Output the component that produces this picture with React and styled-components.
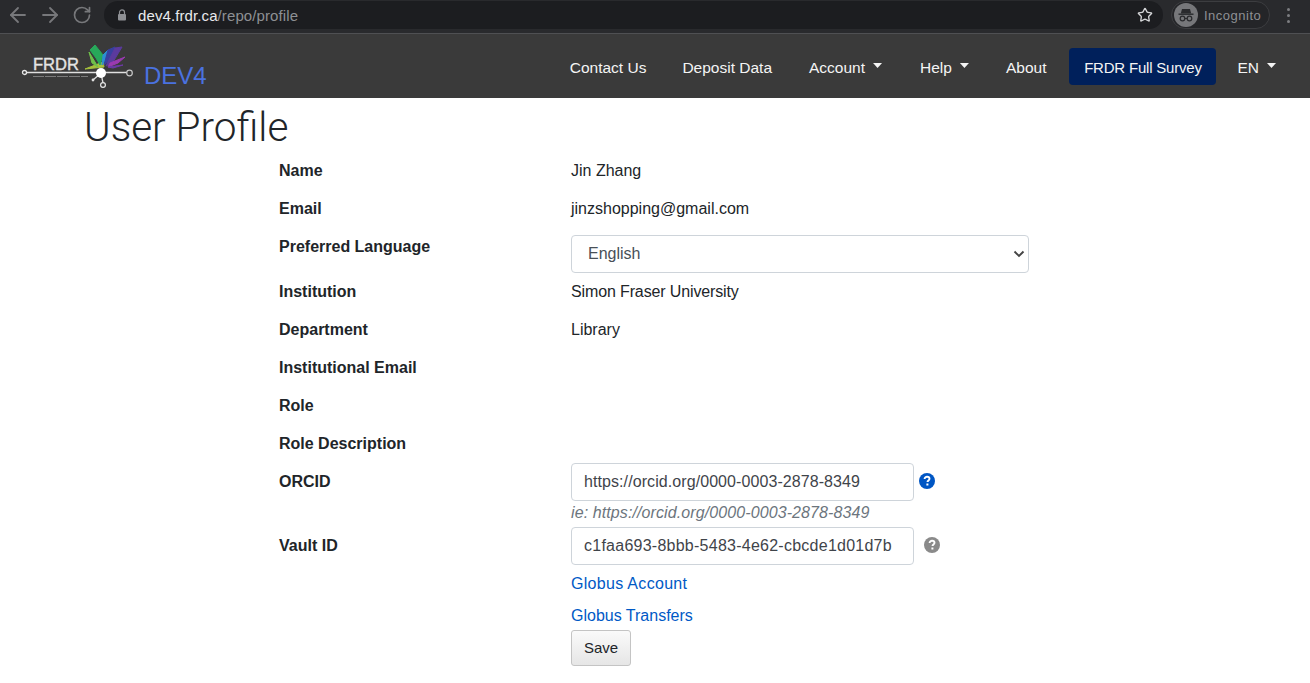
import React from "react";
import styled, { createGlobalStyle } from "styled-components";
import { ArrowLeft, ArrowRight, RotateCw, Star } from "lucide-react";

const GlobalStyle = createGlobalStyle`
  html, body {
    margin: 0;
    padding: 0;
    background: #fff;
    font-family: "Liberation Sans", Arial, sans-serif;
    font-size: 16px;
    color: #212529;
    overflow: hidden;
  }
`;

const Chrome = styled.div`
  height: 34px;
  box-sizing: border-box;
  background: #292a2d;
  border-bottom: 1px solid #4f5053;
  display: flex;
  align-items: center;
  padding: 1px 0 4px 6px;
`;

const NavArrows = styled.div`
  display: flex;
  align-items: center;
  gap: 8px;
  color: #77787b;
  width: 98px;

  svg:last-child {
    margin-left: 2px;
  }
`;

const AddressBar = styled.div`
  width: 1059px;
  height: 28px;
  background: #1c1d20;
  border-radius: 14px;
  display: flex;
  align-items: center;
  padding: 0 10px 0 13px;
  box-sizing: border-box;
  font-size: 15px;
  letter-spacing: 0.1px;
`;

const LockIcon = styled.svg`
  width: 10px;
  height: 12px;
  margin-right: 11px;
  flex: none;
`;

const Host = styled.span`
  color: #e8eaed;
`;

const UrlPath = styled.span`
  color: #8e9094;
  flex: 1;
`;

const IncognitoPill = styled.div`
  margin-left: 8px;
  width: 99px;
  height: 28px;
  border: 1px solid #3c3d40;
  background: #242528;
  border-radius: 14px;
  box-sizing: border-box;
  display: flex;
  align-items: center;
  gap: 6px;
  padding-left: 2px;
  color: #8e9094;
  font-size: 13px;
  letter-spacing: 0.5px;
`;

const Dots = styled.div`
  margin-left: 17px;
  display: flex;
  flex-direction: column;
  gap: 3px;

  span {
    width: 3px;
    height: 3px;
    border-radius: 50%;
    background: #7d7e81;
  }
`;

const Navbar = styled.nav`
  height: 64px;
  background: #3a3a3a;
  display: flex;
  align-items: center;
  justify-content: space-between;
  padding: 0 26px 0 21px;
`;

const Brand = styled.div`
  display: flex;
  align-items: flex-end;
  gap: 10px;
  color: #4a72e0;
  font-size: 24px;
  line-height: 28px;
`;

const BrandName = styled.span`
  margin-bottom: -1px;
`;

const NavList = styled.div`
  display: flex;
  align-items: center;
`;

const NavItem = styled.a`
  color: #f4f4f4;
  font-size: 15.5px;
  line-height: 24px;
  padding: 10px 8px 6px;
  margin-left: ${(p) => p.$gap}px;
  display: flex;
  align-items: center;
  white-space: nowrap;
`;

const Caret = styled.span`
  width: 9px;
  height: 5px;
  margin-left: 8px;
  margin-bottom: 5px;
  background: #f4f4f4;
  clip-path: polygon(0 0, 100% 0, 50% 100%);
`;

const SurveyButton = styled.a`
  margin-left: 15px;
  width: 147px;
  height: 37px;
  box-sizing: border-box;
  padding-top: 3px;
  background: #00205b;
  color: #f4f4f4;
  border-radius: 4px;
  display: flex;
  align-items: center;
  justify-content: center;
  font-size: 15px;
  letter-spacing: -0.2px;
`;

const PageTitle = styled.h1`
  margin: 0;
  height: 53px;
  padding: 5px 0 0 84px;
  box-sizing: border-box;
  font-family: Roboto, "Liberation Sans", sans-serif;
  font-size: 40.5px;
  line-height: 48px;
  font-weight: 300;
  color: #212529;
`;

const Form = styled.div`
  margin-left: 279px;
  width: 760px;
`;

const Row = styled.div`
  display: grid;
  grid-template-columns: 292px 1fr;
  height: ${(p) => p.$height || 38}px;
`;

const Label = styled.div`
  padding-top: 8px;
  line-height: 24px;
  font-weight: 700;
  font-size: 16px;
`;

const Value = styled.div`
  padding-top: 8px;
  line-height: 24px;
  letter-spacing: ${(p) => p.$spacing || 0}px;
`;

const SelectBox = styled.div`
  margin-top: 8px;
  width: 458px;
  height: 38px;
  box-sizing: border-box;
  border: 1px solid #ced4da;
  border-radius: 4px;
  display: flex;
  align-items: center;
  justify-content: space-between;
  padding: 0 1px 0 16px;
  background: #fff;
  color: #495057;
`;

const InputRow = styled.div`
  margin-top: 1px;
  display: flex;
  align-items: center;
`;

const Input = styled.div`
  width: 343px;
  height: 38px;
  box-sizing: border-box;
  border: 1px solid #ced4da;
  border-radius: 4px;
  padding: 0 12px;
  display: flex;
  align-items: center;
  color: #3f444a;
  white-space: nowrap;
  letter-spacing: ${(p) => p.$spacing}px;
`;

const HelpIcon = styled.svg`
  width: 16px;
  height: 16px;
  margin-left: ${(p) => p.$gap}px;
  margin-bottom: 2px;
  flex: none;
`;

const Hint = styled.div`
  margin-top: 1px;
  line-height: 22px;
  font-style: italic;
  color: #6c757d;
  letter-spacing: 0.1px;
`;

const GlobusLink = styled.a`
  display: block;
  color: #0059c6;
  line-height: 24px;
  margin-top: ${(p) => p.$top}px;
  letter-spacing: ${(p) => p.$spacing || 0}px;
`;

const SaveButton = styled.button`
  display: block;
  margin-top: 2px;
  width: 60px;
  height: 36px;
  border: 1px solid #c4c4c4;
  border-radius: 3px;
  background: linear-gradient(#fafafa, #e6e6e6);
  font: inherit;
  font-size: 15px;
  color: #212529;
  padding: 0 0 2px;
`;

const Help = ({ color, gap }) => (
  <HelpIcon $gap={gap} viewBox="0 0 16 16">
    <circle cx="8" cy="8" r="8" fill={color} />
    <path
      d="M5.6 6.1c0-1.5 1.1-2.3 2.5-2.3s2.4.8 2.4 2c0 1.8-2 1.7-2 3.3"
      fill="none"
      stroke="#fff"
      strokeWidth="1.9"
    />
    <rect x="7.4" y="10.5" width="2" height="2" fill="#fff" />
  </HelpIcon>
);

const Logo = () => (
  <svg width="113" height="46" viewBox="0 0 113 46">
    <g strokeWidth="1" strokeLinejoin="round">
      <polygon points="64,26 82,19 83,24" fill="#a6c13c" stroke="#a6c13c" />
      <polygon points="68,9 77,24 71,20" fill="#6fc04a" stroke="#6fc04a" />
      <polygon points="74,2 82,12 79,22 75,15 69,7" fill="#27a85a" stroke="#27a85a" />
      <polygon points="82,12 87,7 86,15 81,22" fill="#2b8fd0" stroke="#2b8fd0" />
      <polygon points="87,7 94,4 89,17 83,22" fill="#37409f" stroke="#37409f" />
      <polygon points="94,5 101,4 92,19 85,23" fill="#5b3a9e" stroke="#5b3a9e" />
      <polygon points="89,20 104,14 97,20 87,24" fill="#9a3ab0" stroke="#9a3ab0" />
      <polygon points="87,24 102,22 92,25" fill="#6d3aa8" stroke="#6d3aa8" />
    </g>
    <text
      x="12"
      y="27"
      fill="#e4e4e4"
      stroke="#e4e4e4"
      strokeWidth="0.35"
      fontSize="16.5"
      fontFamily="Liberation Sans, Arial, sans-serif"
      textLength="46"
      lengthAdjust="spacingAndGlyphs"
    >
      FRDR
    </text>
    <line x1="4" y1="29.5" x2="106" y2="29.5" stroke="#e0e0e0" strokeWidth="1.5" />
    <line x1="12" y1="33.5" x2="67" y2="33.5" stroke="#7c7c7c" strokeWidth="1" strokeDasharray="11 1" />
    <circle cx="3.5" cy="29.5" r="2" fill="#3a3a3a" stroke="#e6e6e6" strokeWidth="1.3" />
    <circle cx="108.5" cy="30" r="2.8" fill="#3a3a3a" stroke="#c8c8c8" strokeWidth="1.2" />
    <line x1="80" y1="30" x2="82" y2="40" stroke="#e0e0e0" strokeWidth="1.3" />
    <line x1="80" y1="30" x2="72" y2="37" stroke="#e0e0e0" strokeWidth="1.3" />
    <circle cx="80" cy="30" r="5" fill="#fff" />
    <circle cx="72" cy="37" r="1.4" fill="#e0e0e0" />
    <circle cx="82" cy="42" r="2.4" fill="#3a3a3a" stroke="#e6e6e6" strokeWidth="1.2" />
  </svg>
);

const IncognitoIcon = () => (
  <svg width="24" height="24" viewBox="0 0 24 24">
    <circle cx="12" cy="12" r="12" fill="#76777a" />
    <path d="M8 6h8l1.2 4.5H6.8z" fill="#292a2d" />
    <rect x="4.5" y="10.5" width="15" height="1.4" fill="#292a2d" />
    <circle cx="8.5" cy="15.5" r="2.3" fill="none" stroke="#292a2d" strokeWidth="1.2" />
    <circle cx="15.5" cy="15.5" r="2.3" fill="none" stroke="#292a2d" strokeWidth="1.2" />
    <line x1="10.8" y1="15.5" x2="13.2" y2="15.5" stroke="#292a2d" strokeWidth="1.2" />
  </svg>
);

const App = () => {
  return (
    <>
      <GlobalStyle />
      <Chrome>
        <NavArrows>
          <ArrowLeft size={24} strokeWidth={1.8} />
          <ArrowRight size={24} strokeWidth={1.8} />
          <RotateCw size={20} strokeWidth={2} />
        </NavArrows>
        <AddressBar>
          <LockIcon viewBox="0 0 10 12">
            <path d="M2.5 5V3.4a2.5 2.5 0 0 1 5 0V5" fill="none" stroke="#8e9094" strokeWidth="1.2" />
            <rect x="1" y="5" width="8" height="6.5" rx="1" fill="#8e9094" />
          </LockIcon>
          <Host>dev4.frdr.ca</Host>
          <UrlPath>/repo/profile</UrlPath>
          <Star size={16} strokeWidth={2} color="#d5d6d8" />
        </AddressBar>
        <IncognitoPill>
          <IncognitoIcon />
          Incognito
        </IncognitoPill>
        <Dots>
          <span />
          <span />
          <span />
        </Dots>
      </Chrome>

      <Navbar>
        <Brand>
          <Logo />
          <BrandName>DEV4</BrandName>
        </Brand>
        <NavList>
          <NavItem>Contact Us</NavItem>
          <NavItem $gap={20}>Deposit Data</NavItem>
          <NavItem $gap={21}>Account<Caret /></NavItem>
          <NavItem $gap={22}>Help<Caret /></NavItem>
          <NavItem $gap={21}>About</NavItem>
          <SurveyButton>FRDR Full Survey</SurveyButton>
          <NavItem $gap={13}>EN<Caret /></NavItem>
        </NavList>
      </Navbar>

      <PageTitle>User Profile</PageTitle>

      <Form>
        <Row>
          <Label>Name</Label>
          <Value>Jin Zhang</Value>
        </Row>
        <Row>
          <Label>Email</Label>
          <Value>jinzshopping@gmail.com</Value>
        </Row>
        <Row $height={45}>
          <Label>Preferred Language</Label>
          <SelectBox>
            English
            <svg width="16" height="8" viewBox="0 0 16 8">
              <path d="M3.5 1.5l4.5 4.5 4.5-4.5" fill="none" stroke="#444" strokeWidth="1.9" />
            </svg>
          </SelectBox>
        </Row>
        <Row>
          <Label>Institution</Label>
          <Value $spacing={-0.13}>Simon Fraser University</Value>
        </Row>
        <Row>
          <Label>Department</Label>
          <Value>Library</Value>
        </Row>
        <Row>
          <Label>Institutional Email</Label>
          <Value />
        </Row>
        <Row>
          <Label>Role</Label>
          <Value />
        </Row>
        <Row>
          <Label>Role Description</Label>
          <Value />
        </Row>
        <Row $height={64}>
          <Label>ORCID</Label>
          <div>
            <InputRow>
              <Input $spacing={0.08}>https://orcid.org/0000-0003-2878-8349</Input>
              <Help color="#0056c4" gap={5} />
            </InputRow>
            <Hint>ie: https://orcid.org/0000-0003-2878-8349</Hint>
          </div>
        </Row>
        <Row $height={150}>
          <Label>Vault ID</Label>
          <div>
            <InputRow>
              <Input $spacing={0.25}>c1faa693-8bbb-5483-4e62-cbcde1d01d7b</Input>
              <Help color="#8a8a8a" gap={10} />
            </InputRow>
            <GlobusLink $top={7} $spacing={0.3}>Globus Account</GlobusLink>
            <GlobusLink $top={8}>Globus Transfers</GlobusLink>
            <SaveButton>Save</SaveButton>
          </div>
        </Row>
      </Form>
    </>
  );
};

export default App;
